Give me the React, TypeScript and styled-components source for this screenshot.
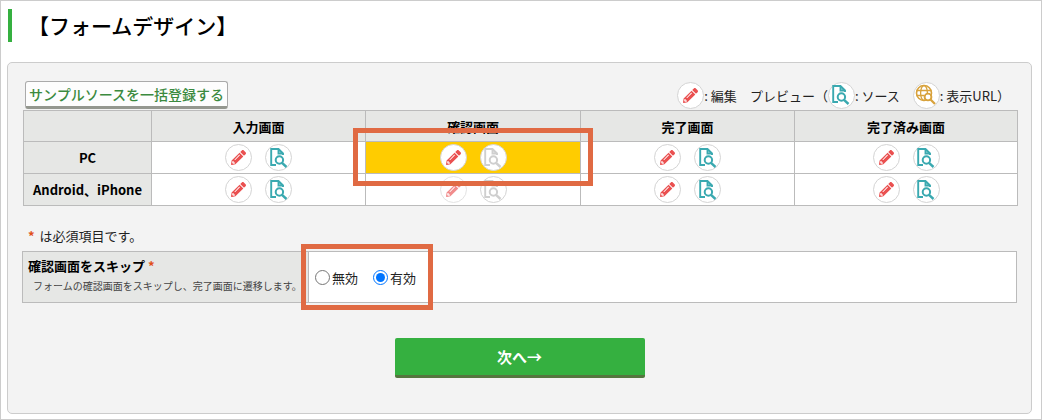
import styled, { createGlobalStyle } from 'styled-components';
import { FunctionComponent } from 'react';
import { FaPencilAlt } from 'react-icons/fa';

const GlobalStyle = createGlobalStyle`
  html, body {
    margin: 0;
    padding: 0;
    background: #fff;
  }
  body {
    font-family: "Noto Sans CJK JP", "Noto Sans", sans-serif;
    color: #000;
  }
`;

const Page = styled.div`
  position: relative;
  box-sizing: border-box;
  width: 1042px;
  height: 420px;
  overflow: hidden;
  border: 1px solid #ccc;
  padding: 8px 9px 5px 6px;
  display: flex;
  flex-direction: column;
`;

const Title = styled.h2`
  margin: 0 0 20px 1px;
  height: 33px;
  border-left: 4px solid #35b040;
  padding-left: 16px;
  font-size: 21px;
  line-height: 33px;
  font-weight: 500;
`;

const Panel = styled.section`
  box-sizing: border-box;
  height: 352px;
  background: #f3f3f3;
  border: 1px solid #ccc;
  border-radius: 5px;
  padding: 17px 14px 0 15px;
`;

const TopBar = styled.div`
  display: flex;
  align-items: center;
  justify-content: space-between;
  height: 30px;
  padding-left: 2px;
  margin-bottom: 0;
`;

const SampleButton = styled.button`
  box-sizing: border-box;
  width: 203px;
  height: 28px;
  padding: 0;
  background: #fdfdfd;
  border: 1px solid #aaa;
  border-bottom: 3px solid #94978f;
  border-radius: 3px;
  color: #3b8a3f;
  font-family: inherit;
  font-size: 14px;
  font-weight: 500;
  line-height: 22px;
`;

const Legend = styled.div`
  display: flex;
  align-items: center;
  font-size: 13px;
  color: #222;
  padding-right: 7px;
`;

const LegendGroup = styled.span<{ $gap?: number }>`
  display: flex;
  align-items: center;
  margin-left: ${(p) => p.$gap ?? 0}px;
  white-space: pre;
`;

const Grid = styled.table`
  border-collapse: collapse;
  table-layout: fixed;
  width: 995px;
  margin-left: 0;

  th, td {
    border: 1px solid #bbb;
    padding: 0;
  }
`;

const HeadCell = styled.th`
  height: 30px;
  background: #e6e7e5;
  font-size: 13px;
  font-weight: 700;
  text-align: center;
`;

const RowHead = styled.th`
  height: 31px;
  background: #e6e7e5;
  font-size: 13px;
  font-weight: 700;
  text-align: center;
  white-space: nowrap;
`;

const ActionCell = styled.td<{ $active?: boolean }>`
  height: 31px;
  background: ${(p) => (p.$active ? '#ffcc00' : '#fff')};
`;

const ActionBox = styled.div`
  display: flex;
  justify-content: center;
  align-items: center;
  gap: 13px;
`;

const Circle = styled.span`
  box-sizing: border-box;
  flex: none;
  width: 27px;
  height: 27px;
  border-radius: 50%;
  border: 1px solid #d4d4d4;
  background: #fff;
  display: inline-flex;
  align-items: center;
  justify-content: center;
`;

const PencilCircle = styled(Circle)<{ $faded?: boolean }>`
  color: #ea5050;
  opacity: ${(p) => (p.$faded ? 0.65 : 1)};

  svg {
    width: 15px;
    height: 15px;
  }
`;

const Required = styled.p`
  margin: 20px 0 6px 5px;
  font-size: 13px;
  line-height: 19px;
  color: #222;
`;

const Star = styled.span`
  color: #e0501a;
  font-weight: 700;
  margin-right: 5px;
`;

const SkipRow = styled.div`
  box-sizing: border-box;
  display: flex;
  width: 995px;
  height: 52px;
  margin-left: -1px;
  border: 1px solid #bbb;
`;

const SkipLabel = styled.div`
  box-sizing: border-box;
  width: 286px;
  flex: none;
  background: #e6e7e5;
  border-right: 1px solid #bbb;
  padding: 3px 0 0 5px;
`;

const SkipTitle = styled.div`
  font-size: 13px;
  font-weight: 700;
  line-height: 22px;
`;

const SkipNote = styled.div`
  font-size: 10px;
  line-height: 18px;
  color: #444;
  padding-left: 5px;
  white-space: nowrap;
`;

const SkipValue = styled.div`
  flex: 1;
  background: #fff;
  display: flex;
  align-items: center;
  padding: 0 0 0 6px;
  gap: 15px;
`;

const RadioLabel = styled.label`
  display: flex;
  align-items: center;
  font-size: 13px;
  color: #222;
`;

const Radio = styled.input`
  width: 15px;
  height: 15px;
  margin: 0 2px 0 0;
  accent-color: #0075ff;
`;

const Footer = styled.div`
  display: flex;
  justify-content: center;
  margin: 35px 0 0 -1px;
`;

const NextButton = styled.button`
  box-sizing: border-box;
  width: 250px;
  height: 40px;
  padding: 0;
  border: none;
  border-bottom: 3px solid #55763f;
  border-radius: 2px;
  background: #35b040;
  color: #fff;
  font-family: inherit;
  font-size: 15px;
  font-weight: 700;
`;

const Callout = styled.div<{ $left: number; $top: number; $w: number; $h: number }>`
  position: absolute;
  box-sizing: border-box;
  left: ${(p) => p.$left}px;
  top: ${(p) => p.$top}px;
  width: ${(p) => p.$w}px;
  height: ${(p) => p.$h}px;
  border: 5px solid #e06a43;
  pointer-events: none;
`;

const Pencil: FunctionComponent<{ faded?: boolean }> = ({ faded }) => (
  <PencilCircle $faded={faded}>
    <FaPencilAlt />
  </PencilCircle>
);

const DocSearch: FunctionComponent<{ color?: string }> = ({ color = '#3aa9b0' }) => (
  <Circle>
    <svg width="20" height="22" viewBox="0 0 20 22" fill="none">
      <path
        d="M7 18H2.2V2H9.5L14 6.5V8M9.5 2V6.5H14"
        stroke={color}
        strokeWidth="1.9"
      />
      <circle cx="10.4" cy="13" r="3.7" stroke={color} strokeWidth="2" />
      <path d="M13 15.8L17.5 20" stroke={color} strokeWidth="2.4" />
    </svg>
  </Circle>
);

const GlobeSearch: FunctionComponent = () => (
  <Circle>
    <svg width="22" height="22" viewBox="0 0 22 22" fill="none" stroke="#d8a23c">
      <circle cx="9" cy="9" r="7.5" strokeWidth="1.6" />
      <ellipse cx="9" cy="9" rx="3.4" ry="7.5" strokeWidth="1.3" />
      <path d="M1.5 6.5H16.5M1.5 11.5H9" strokeWidth="1.3" />
      <circle cx="13" cy="13" r="3.4" fill="#fff" strokeWidth="1.9" />
      <path d="M15.5 15.5L20 20" strokeWidth="2.3" />
    </svg>
  </Circle>
);

const Actions: FunctionComponent<{ fadedPencil?: boolean; disabled?: boolean }> = ({
  fadedPencil,
  disabled,
}) => (
  <ActionBox>
    <Pencil faded={fadedPencil} />
    <DocSearch color={disabled ? '#cfcfcf' : undefined} />
  </ActionBox>
);

const columns = ['入力画面', '確認画面', '完了画面', '完了済み画面'];

const App: FunctionComponent = () => {
  return (
    <Page>
      <GlobalStyle />
      <Title>【フォームデザイン】</Title>

      <Panel>
        <TopBar>
          <SampleButton>サンプルソースを一括登録する</SampleButton>
          <Legend>
            <LegendGroup>
              <Pencil />
              {': 編集'}
            </LegendGroup>
            <LegendGroup $gap={13}>
              {'プレビュー（'}
              <DocSearch />
              {': ソース'}
            </LegendGroup>
            <LegendGroup $gap={13}>
              <GlobeSearch />
              {': 表示URL）'}
            </LegendGroup>
          </Legend>
        </TopBar>

        <Grid>
          <colgroup>
            <col style={{ width: 128 }} />
            <col style={{ width: 214 }} />
            <col style={{ width: 215 }} />
            <col style={{ width: 214 }} />
            <col style={{ width: 223 }} />
          </colgroup>
          <thead>
            <tr>
              <HeadCell />
              {columns.map((c) => (
                <HeadCell key={c}>{c}</HeadCell>
              ))}
            </tr>
          </thead>
          <tbody>
            <tr>
              <RowHead>PC</RowHead>
              <ActionCell>
                <Actions />
              </ActionCell>
              <ActionCell $active>
                <Actions disabled />
              </ActionCell>
              <ActionCell>
                <Actions />
              </ActionCell>
              <ActionCell>
                <Actions />
              </ActionCell>
            </tr>
            <tr>
              <RowHead>Android、iPhone</RowHead>
              <ActionCell>
                <Actions />
              </ActionCell>
              <ActionCell>
                <Actions fadedPencil disabled />
              </ActionCell>
              <ActionCell>
                <Actions />
              </ActionCell>
              <ActionCell>
                <Actions />
              </ActionCell>
            </tr>
          </tbody>
        </Grid>

        <Required>
          <Star>*</Star>は必須項目です。
        </Required>

        <SkipRow>
          <SkipLabel>
            <SkipTitle>
              確認画面をスキップ <Star>*</Star>
            </SkipTitle>
            <SkipNote>フォームの確認画面をスキップし、完了画面に遷移します。</SkipNote>
          </SkipLabel>
          <SkipValue>
            <RadioLabel>
              <Radio type="radio" name="skip" />
              無効
            </RadioLabel>
            <RadioLabel>
              <Radio type="radio" name="skip" defaultChecked />
              有効
            </RadioLabel>
          </SkipValue>
        </SkipRow>

        <Footer>
          <NextButton>次へ→</NextButton>
        </Footer>
      </Panel>

      <Callout $left={352} $top={127} $w={240} $h={58} />
      <Callout $left={300} $top={243} $w={132} $h={66} />
    </Page>
  );
};

export default App;
